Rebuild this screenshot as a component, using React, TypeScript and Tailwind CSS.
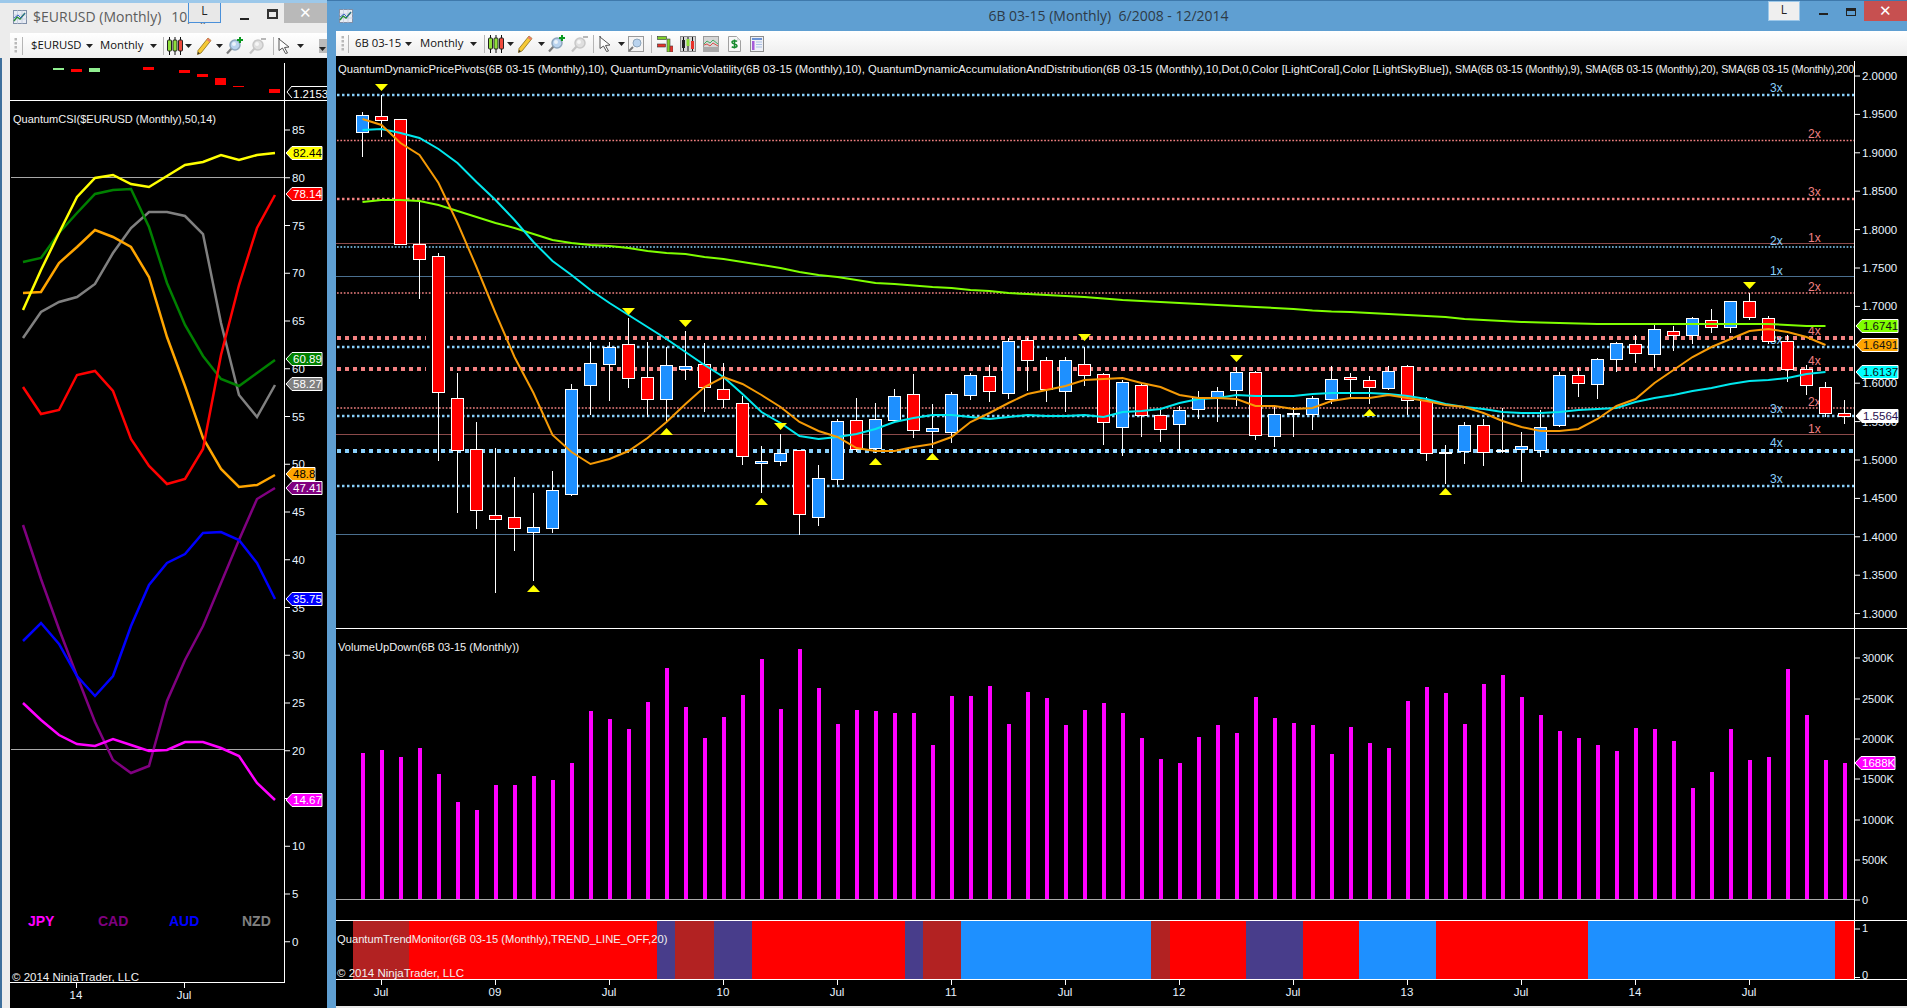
import React from 'react';

// [up, wickTop, bodyTop, bodyBottom, wickBottom] in page pixels
const candles: number[][] = [
  [1,112,115,132,157],[0,95,116,120,137],[0,119,119,244,244],[0,200,244,259,299],[0,253,256,392,461],
  [0,373,398,450,513],[0,422,449,510,529],[0,448,515,519,593],[0,477,517,528,551],[1,493,527,532,581],
  [1,471,490,528,533],[1,384,389,494,496],[1,342,363,385,415],[1,342,347,364,401],[0,318,344,378,388],
  [0,342,377,399,417],[1,347,365,399,423],[1,331,366,369,380],[0,343,364,387,412],[0,363,389,399,408],
  [0,396,403,456,465],[1,446,461,463,493],[1,434,453,461,466],[0,450,450,514,535],[1,465,478,517,526],
  [1,419,421,479,485],[0,398,420,449,452],[1,403,419,448,453],[1,389,396,420,423],[0,374,394,430,438],
  [1,404,428,431,448],[1,392,394,432,443],[1,373,375,395,400],[0,365,376,391,402],[1,338,341,393,399],
  [0,338,340,360,391],[0,357,360,389,402],[1,357,360,391,412],[0,347,364,375,386],[0,373,374,422,445],
  [1,380,382,427,456],[0,383,385,415,437],[0,410,415,429,442],[1,406,410,424,451],[1,391,397,409,419],
  [1,387,391,398,422],[1,367,372,390,406],[0,371,372,435,440],[1,407,414,436,447],[1,407,413,414,437],
  [1,396,398,414,430],[1,366,379,399,404],[0,373,377,379,397],[0,376,380,387,404],[1,366,371,388,390],
  [0,365,366,400,415],[0,397,400,453,461],[1,445,452,453,484],[1,422,425,451,464],[0,419,425,452,466],
  [1,408,450,451,453],[1,432,446,449,482],[1,410,427,450,457],[1,372,375,425,427],[0,368,375,383,397],
  [1,358,359,384,399],[1,342,343,359,372],[0,335,344,353,363],[1,323,329,354,368],[0,326,331,335,351],
  [1,317,318,335,344],[0,309,320,327,333],[1,301,301,327,333],[0,293,301,317,320],[0,316,318,341,344],
  [0,335,341,369,382],[0,365,369,385,395],[0,382,387,413,417],[0,400,413,416,424],
];

const sma9 = [119,125,143,155,183,223,267,313,357,393,435,452,464,459,451,438,422,404,387,377,384,395,407,422,431,437,448,451,451,447,444,437,422,413,403,394,390,386,380,379,378,383,387,395,398,398,399,406,406,409,408,401,398,398,395,398,401,405,407,413,421,427,431,431,429,419,406,399,383,370,357,347,339,331,329,332,337,345];
const sma20 = [130,129,133,138,149,163,182,200,220,242,261,275,290,303,315,327,339,352,365,377,394,412,423,436,439,437,434,429,422,418,415,415,417,419,417,415,416,416,415,417,412,411,409,403,399,398,395,396,396,396,394,393,393,393,394,396,399,404,407,409,412,413,413,412,410,409,408,402,398,395,391,388,384,381,380,378,374,372];
const sma200 = [202,200,200,201,205,211,217,223,228,234,240,243,245,246,248,251,253,254,257,259,262,265,268,272,275,277,280,283,284,285.5,287,288,290,291,293,294,295,296,297,298.5,300,301,302,303,304,305,306,307,308,309,310.5,311.5,312,313,314,315,316,317,319,320,321,322,322.5,323,323.5,324,324,324,324,324,324,324,324,324,324,325,326,326];

const volumeTops = [400,391,412,385,463,547,571,496,496,469,481,430,274,298,328,247,145,262,355,292,226,118,268,88,205,313,271,274,280,280,376,229,229,199,313,217,235,316,271,250,280,355,418,430,352,316,340,232,295,310,316,403,322,370,385,244,202,220,313,193,166,232,286,334,355,376,394,325,328,364,505,457,328,421,412,148,286,421,430];

const trendBlocks: [number, number, string][] = [
  [353,409,'#b22222'],[409,657,'#ff0000'],[657,675,'#483d8b'],[675,714,'#b22222'],[714,752,'#483d8b'],
  [752,905,'#ff0000'],[905,923,'#483d8b'],[923,961,'#b22222'],[961,1151,'#1e90ff'],[1151,1170,'#b22222'],
  [1170,1246,'#ff0000'],[1246,1303,'#483d8b'],[1303,1359,'#ff0000'],[1359,1436,'#1e90ff'],[1436,1588,'#ff0000'],
  [1588,1835,'#1e90ff'],[1835,1854,'#ff0000'],
];

// y, weight, colour of the pivot / volatility levels
const levels: [number, 'thin' | 'med' | 'thick', string][] = [
  [95,'med','#87cefa'],[140.5,'thin','#f08080'],[199,'med','#f08080'],[247,'thin','#87cefa'],[293,'thin','#f08080'],
  [338,'thick','#f08080'],[347,'med','#87cefa'],[369,'thick','#f08080'],[408,'thin','#f08080'],[416,'med','#87cefa'],
  [451,'thick','#87cefa'],[486,'med','#87cefa'],
];
const solidLevels: [number, string][] = [[243.5,'#8b4a4a'],[276.5,'#4a6f8f'],[434.5,'#8b4a4a'],[534.5,'#4a6f8f']];

const levelLabels: [number, number, string, string][] = [
  [1770,92,'3x','#87cefa'],[1808,138,'2x','#f08080'],[1808,196,'3x','#f08080'],[1770,245,'2x','#87cefa'],[1808,242,'1x','#f08080'],
  [1770,275,'1x','#87cefa'],[1808,291,'2x','#f08080'],[1808,335,'4x','#f08080'],[1770,344,'3x','#87cefa'],[1808,365,'4x','#f08080'],
  [1808,406,'2x','#f08080'],[1770,413,'3x','#87cefa'],[1808,433,'1x','#f08080'],[1770,447,'4x','#87cefa'],[1770,483,'3x','#87cefa'],
];

const downMarks: [number, number][] = [[1,84],[14,308],[17,320],[22,423],[38,334],[46,355],[73,282]];
const upMarks: [number, number][] = [[9,585],[16,428],[21,498],[27,458],[30,453],[53,409],[57,488]];

const priceTicks = ['2.0000','1.9500','1.9000','1.8500','1.8000','1.7500','1.7000','1.6500','1.6000','1.5500','1.5000','1.4500','1.4000','1.3500','1.3000'];
const volumeTicks: [string, number][] = [['3000K',658],['2500K',699],['2000K',739],['1500K',779],['1000K',820],['500K',860],['0',900]];
const timeTicks: [string, number][] = [['Jul',381],['09',495],['Jul',609],['10',723],['Jul',837],['11',951],['Jul',1065],['12',1179],['Jul',1293],['13',1407],['Jul',1521],['14',1635],['Jul',1749]];

const cx = (i: number) => 362.5 + 19 * i;
const poly = (ys: number[]) => ys.map((y, i) => `${cx(i)},${y}`).join(' ');

// left chart: 15 monthly points per currency
const leftX = (i: number) => 23 + 18 * i;
const leftPoly = (ys: number[]) => ys.map((y, i) => `${leftX(i)},${y}`).join(' ');
const csiLines: [string, number[]][] = [
  ['#808080',[338,312,302,297,284,253,228,212,212,216,234,323,395,417,385]],
  ['#ffa500',[293,292,263,247,230,237,247,277,337,386,438,469,487,485,475]],
  ['#008000',[262,258,233,213,194,190,189,227,283,325,356,379,386,373,360]],
  ['#ffff00',[310,270,233,197,178,175,184,187,176,165,162,155,160,155,153]],
  ['#800080',[525,579,629,676,722,760,773,766,701,660,626,583,540,499,488]],
  ['#0000ff',[641,623,644,676,696,676,626,585,563,554,533,532,540,563,599]],
  ['#ff00ff',[703,720,735,744,746,739,745,751,750,742,742,748,756,783,800]],
  ['#ff0000',[387,414,410,375,371,391,439,466,484,479,449,355,285,228,195]],
];
const csiTags: [number, string, string, string, number][] = [
  [153,'82.44','#ffff00','#000',322],[194,'78.14','#ff0000','#fff',322],[359,'60.89','#008000','#fff',322],[384,'58.27','#808080','#fff',322],
  [474,'48.8','#ffa500','#000',315],[488,'47.41','#800080','#fff',322],[599,'35.75','#0000ff','#fff',322],[800,'14.67','#ff00ff','#fff',322],
];
const topBars: [number, number, number, number, string][] = [
  [53,68,11,2,'#90ee90'],[71,69,11,3,'#ff0000'],[89,68,11,4,'#90ee90'],[143,67,11,3,'#ff0000'],[179,70,11,3,'#ff0000'],
  [197,74,11,3,'#ff0000'],[215,78,11,7,'#ff0000'],[233,86,11,1,'#ff0000'],[269,89,11,4,'#ff0000'],
];

function At({ className, children }: { className: string; children: React.ReactNode }) {
  return <span className={`flex shrink-0 items-center ${className}`}>{children}</span>;
}

function Tag({ x0, x1, y, label, fill, text }: { x0: number; x1: number; y: number; label: string; fill: string; text: string }) {
  return (
    <g>
      <polygon points={`${x0},${y} ${x0 + 6},${y - 6.5} ${x1},${y - 6.5} ${x1},${y + 6.5} ${x0 + 6},${y + 6.5}`} fill={fill} stroke="#fff" strokeWidth="1" />
      <text x={x0 + 7} y={y + 4} fontSize="11.5" fill={text}>{label}</text>
    </g>
  );
}

function Caret() {
  return (
    <svg width="7" height="4" viewBox="0 0 7 4" className="shrink-0"><path d="M0 0h7L3.5 4z" fill="#222" /></svg>
  );
}

function Grip() {
  return (
    <svg width="4" height="18" viewBox="0 0 4 18" className="shrink-0">
      {[1, 5, 9, 13].map((y) => <rect key={y} x="0.5" y={y} width="2.5" height="2.5" fill="#b8b8b8" />)}
    </svg>
  );
}

function Sep() {
  return <div className="h-[18px] w-px shrink-0 bg-[#b5b5b5]" />;
}

function CandleIcon() {
  return (
    <svg width="16" height="18" viewBox="0 0 16 18" className="shrink-0">
      <path d="M2.5 0v18M8 0v18M13.5 0v18" stroke="#111" strokeWidth="1" />
      <rect x="0.5" y="3" width="4" height="11" rx="1" fill="#8fe03a" stroke="#222" />
      <rect x="6" y="3" width="4" height="11" rx="1" fill="#8fe03a" stroke="#222" />
      <rect x="11.5" y="3" width="4" height="11" rx="1" fill="#ef4a3c" stroke="#222" />
    </svg>
  );
}

function PencilIcon() {
  return (
    <svg width="15" height="18" viewBox="0 0 15 18" className="shrink-0">
      <path d="M11 1l3 2.5L4 16l-3.5 1.5L1 13.500z" fill="#f6c935" stroke="#8a6d1b" strokeWidth="0.8" />
      <path d="M11 1l3 2.500-1.500 1.800-3-2.500z" fill="#e8806a" />
      <path d="M0.500 17.500L1 15l2 1.200z" fill="#333" />
    </svg>
  );
}

function GlassIcon({ plus = false, muted = false }: { plus?: boolean; muted?: boolean }) {
  return (
    <svg width="17" height="18" viewBox="0 0 17 18" className="shrink-0">
      <path d="M6 11L1 16.500" stroke={muted ? '#c4c4c4' : '#7c7c7c'} strokeWidth="2.200" />
      <circle cx="9" cy="8" r="5" fill={muted ? '#dfdfdf' : '#b9d3ee'} stroke={muted ? '#c8c8c8' : '#8ea6bd'} strokeWidth="1.500" />
      <circle cx="8" cy="7" r="2" fill="#fff" opacity="0.7" />
      {plus && <path d="M14 0v6M11 3h6" stroke="#0a9a20" strokeWidth="2" />}
      {muted && <path d="M12 2h5" stroke="#b8b8b8" strokeWidth="2" />}
    </svg>
  );
}

function CursorIcon() {
  return (
    <svg width="13" height="17" viewBox="0 0 13 17" className="shrink-0">
      <path d="M1 1l0 1 10 8-4.500.5L9.500 16l-2 .5-3-5.500L1 13.500z" fill="#fff" stroke="#555" strokeWidth="1" />
    </svg>
  );
}

function WindowIcon() {
  return (
    <svg width="14" height="14" viewBox="0 0 14 14" className="shrink-0">
      <rect x="0.500" y="0.500" width="13" height="13" fill="#e8ecf4" stroke="#7f8fa8" />
      <path d="M0 5h14M0 9h14M4.500 0v14M9 0v14" stroke="#b7c2d6" strokeWidth="0.600" />
      <path d="M1 11l3-4 3 2 5-6" fill="none" stroke="#2a8f3a" strokeWidth="1.400" />
      <path d="M1 8l4-3 3 3 4-5" fill="none" stroke="#3358c4" strokeWidth="0.900" />
    </svg>
  );
}

function BoxedGlass() {
  return (
    <svg width="16" height="16" viewBox="0 0 16 16" className="shrink-0">
      <rect x="0.500" y="0.500" width="15" height="15" fill="#f4f4f4" stroke="#9a9a9a" />
      <path d="M5 11L1 15" stroke="#777" strokeWidth="2" />
      <circle cx="9" cy="7" r="4" fill="#b9d3ee" stroke="#8ea6bd" />
    </svg>
  );
}

function BarsIcon() {
  return (
    <svg width="16" height="16" viewBox="0 0 16 16" className="shrink-0">
      <rect x="0.500" y="0.500" width="9" height="3" fill="#7fd02c" stroke="#333" strokeWidth="0.600" />
      <rect x="0.500" y="8" width="8" height="3" fill="#e8322a" stroke="#333" strokeWidth="0.600" />
      <rect x="10" y="3" width="3" height="13" fill="#7fd02c" stroke="#444" strokeWidth="0.600" />
      <rect x="13" y="10" width="3" height="6" fill="#e8322a" stroke="#444" strokeWidth="0.600" />
    </svg>
  );
}

function BoxedCandles() {
  return (
    <svg width="16" height="16" viewBox="0 0 16 16" className="shrink-0">
      <rect x="0.500" y="0.500" width="15" height="15" fill="#d8d8d8" stroke="#8a8a8a" />
      <path d="M3.500 1v14M8 1v14M12.500 1v14" stroke="#111" />
      <rect x="2" y="4" width="3" height="8" fill="#222" />
      <rect x="6.500" y="3" width="3" height="7" fill="#8fe03a" />
      <rect x="11" y="5" width="3" height="8" fill="#e8322a" />
    </svg>
  );
}

function MiniChart() {
  return (
    <svg width="16" height="16" viewBox="0 0 16 16" className="shrink-0">
      <rect x="0.500" y="0.500" width="15" height="15" fill="#d6d6d6" stroke="#9a9a9a" />
      <path d="M0 11h16v5H0z" fill="#a9a9a9" />
      <path d="M1 8l3-3 3 2 3-3 5 4" fill="none" stroke="#34a853" strokeWidth="0.900" />
      <path d="M1 9l3-1 3 2 3-3 5 3" fill="none" stroke="#d9433a" strokeWidth="0.900" />
    </svg>
  );
}

function DollarDoc() {
  return (
    <svg width="13" height="16" viewBox="0 0 13 16" className="shrink-0">
      <path d="M0.500 0.500h8l4 4v11h-12z" fill="#f7f7f7" stroke="#a0a0a0" />
      <path d="M9 4.500V1l3.500 3.500" fill="#ddd" />
      <path d="M9 5.500C8 4.500 4 4.300 4 6.300c0 2.200 5 1.200 5 3.500 0 2-4 2-5.200.8M6.500 3.500v9" fill="none" stroke="#178a2e" strokeWidth="1.500" />
    </svg>
  );
}

function TableIcon() {
  return (
    <svg width="14" height="16" viewBox="0 0 14 16" className="shrink-0">
      <rect x="0.500" y="0.500" width="13" height="15" fill="#eef0f6" stroke="#8d8d8d" />
      <rect x="2" y="2" width="10" height="2" fill="#6b93d6" />
      <rect x="2" y="5" width="2.500" height="9" fill="#a65bd9" />
      <path d="M6 6h6M6 8.500h6M6 11h6" stroke="#a9c0e6" />
    </svg>
  );
}

// price pane of the 6B window, in page coordinates
function PriceChart() {
  return (
    <svg className="block" width="1571" height="572" viewBox="336 56 1571 572">
      {solidLevels.map(([y, c]) => <line key={y} x1="336" x2="1854" y1={y} y2={y} stroke={c} />)}
      {levels.map(([y, weight, c]) => {
        const w = weight === 'thin' ? 1.7 : weight === 'med' ? 2.500 : 4;
        const dash = weight === 'thin' ? '1.700 1.700' : weight === 'med' ? '2.500 2.500' : '4 4';
        return <line key={y} x1="337" x2="1854" y1={y} y2={y} stroke={c} strokeWidth={w} strokeDasharray={dash} />;
      })}
      {/* the two heavy red levels break around the long 2008 candle */}
      <rect x="426" y="335" width="24" height="6" fill="#000" />
      <rect x="426" y="366" width="24" height="6" fill="#000" />
      {levelLabels.map(([x, y, t, c], i) => <text key={i} x={x} y={y} fontSize="12" fill={c}>{t}</text>)}
      {candles.map(([up, wt, bt, bb, wb], i) => (
        <g key={i} shapeRendering="crispEdges">
          <line x1={cx(i)} x2={cx(i)} y1={wt} y2={wb} stroke="#fff" />
          <rect x={cx(i) - 6} y={bt + 0.500} width="12" height={Math.max(bb - bt, 1)} fill={up ? '#1e90ff' : '#ff0000'} stroke="#fff" />
        </g>
      ))}
      <polyline points={poly(sma200)} fill="none" stroke="#7fff00" strokeWidth="2" />
      <polyline points={poly(sma20)} fill="none" stroke="#00e8ee" strokeWidth="2" />
      <polyline points={poly(sma9)} fill="none" stroke="#f59a06" strokeWidth="2" />
      {downMarks.map(([i, y]) => <polygon key={i} points={`${cx(i) - 6.500},${y} ${cx(i) + 6.500},${y} ${cx(i)},${y + 7}`} fill="#ffff00" />)}
      {upMarks.map(([i, y]) => <polygon key={i} points={`${cx(i) - 6.500},${y + 7} ${cx(i) + 6.500},${y + 7} ${cx(i)},${y}`} fill="#ffff00" />)}
      <line x1="1854.500" x2="1854.500" y1="61" y2="628" stroke="#fff" />
      {priceTicks.map((t, i) => {
        const y = 76 + i * 38.400;
        return (
          <g key={t}>
            <line x1="1854" x2="1860" y1={y} y2={y} stroke="#fff" />
            <text x="1862" y={y + 4} fontSize="11.500" fill="#e8f4ff">{t}</text>
          </g>
        );
      })}
      <Tag x0={1856} x1={1898} y={326} label="1.6741" fill="#7fff00" text="#111" />
      <Tag x0={1856} x1={1898} y={345} label="1.6491" fill="#ffa500" text="#111" />
      <Tag x0={1856} x1={1898} y={372} label="1.6137" fill="#00ffff" text="#111" />
      <Tag x0={1856} x1={1898} y={416} label="1.5564" fill="#ffffff" text="#2a1050" />
    </svg>
  );
}

function VolumeChart() {
  return (
    <svg className="block" width="1571" height="291" viewBox="336 629 1571 291">
      {volumeTops.map((top, i) => <rect key={i} x={cx(i) - 2} y={620 + top / 3} width="4" height={899 - 620 - top / 3} fill="#ff00ff" shapeRendering="crispEdges" />)}
      <line x1="336" x2="1854" y1="899.500" y2="899.500" stroke="#a8a8a8" />
      <line x1="1854.500" x2="1854.500" y1="629" y2="920" stroke="#fff" />
      {volumeTicks.map(([t, y]) => (
        <g key={t}>
          <line x1="1854" x2="1860" y1={y} y2={y} stroke="#fff" />
          <text x="1862" y={y + 4} fontSize="11" fill="#e8f4ff">{t}</text>
        </g>
      ))}
      <Tag x0={1855} x1={1895} y={763} label="1688K" fill="#ff00ff" text="#fff" />
    </svg>
  );
}

function TrendChart() {
  return (
    <svg className="block" width="1571" height="58" viewBox="336 921 1571 58">
      {trendBlocks.map(([a, b, c]) => <rect key={a} x={a} y="921" width={b - a} height="58" fill={c} shapeRendering="crispEdges" />)}
      <line x1="1854.500" x2="1854.500" y1="921" y2="979" stroke="#fff" />
      <line x1="1854" x2="1860" y1="929" y2="929" stroke="#fff" />
      <line x1="1854" x2="1860" y1="977.500" y2="977.500" stroke="#fff" />
      <text x="1862" y="932" fontSize="11" fill="#e8f4ff">1</text>
      <text x="1862" y="979" fontSize="11" fill="#e8f4ff">0</text>
    </svg>
  );
}

function TimeAxis() {
  return (
    <svg className="block" width="1571" height="26" viewBox="336 980 1571 26">
      {timeTicks.map(([t, x], i) => (
        <g key={i}>
          <line x1={x + 0.500} x2={x + 0.500} y1="980" y2="985" stroke="#fff" />
          <text x={x} y="996" fontSize="11.500" textAnchor="middle" fill="#e8f4ff">{t}</text>
        </g>
      ))}
    </svg>
  );
}

function CsiTop() {
  return (
    <svg className="block" width="317" height="42" viewBox="10 58 317 42">
      {topBars.map(([x, y, w, h, c], i) => <rect key={i} x={x} y={y} width={w} height={h} fill={c} />)}
      <line x1="284.500" x2="284.500" y1="63" y2="100" stroke="#fff" />
      <polyline points="292,86 287,92 292,98" fill="none" stroke="#fff" />
      <line x1="292" x2="327" y1="86.500" y2="86.500" stroke="#fff" />
      <text x="293" y="98" fontSize="11.500" fill="#fff">1.2153</text>
    </svg>
  );
}

function CsiChart() {
  const ticks = Array.from({ length: 18 }, (_, i) => 85 - i * 5);
  return (
    <svg className="block" width="317" height="882" viewBox="10 101 317 882">
      <line x1="11" x2="284" y1="177.500" y2="177.500" stroke="#a8a8a8" />
      <line x1="11" x2="284" y1="749.500" y2="749.500" stroke="#a8a8a8" />
      {csiLines.map(([c, ys]) => <polyline key={c} points={leftPoly(ys)} fill="none" stroke={c} strokeWidth="2.500" />)}
      <line x1="284.500" x2="284.500" y1="101" y2="982" stroke="#fff" />
      <line x1="10" x2="285" y1="982.500" y2="982.500" stroke="#fff" />
      {ticks.map((v) => {
        const y = 130 + (85 - v) * 9.550;
        return (
          <g key={v}>
            <line x1="284" x2="290" y1={y} y2={y} stroke="#fff" />
            <text x="292" y={y + 4} fontSize="11.500" fill="#e8f4ff">{v}</text>
          </g>
        );
      })}
      {csiTags.map(([y, t, c, txt, x1]) => <Tag key={t} x0={286} x1={x1} y={y} label={t} fill={c} text={txt} />)}
    </svg>
  );
}

function CsiTime() {
  return (
    <svg className="block" width="317" height="25" viewBox="10 983 317 25">
      <line x1="76.500" x2="76.500" y1="983" y2="988" stroke="#fff" />
      <line x1="184.500" x2="184.500" y1="983" y2="988" stroke="#fff" />
      <text x="76" y="999" fontSize="11.500" textAnchor="middle" fill="#e8f4ff">14</text>
      <text x="184" y="999" fontSize="11.500" textAnchor="middle" fill="#e8f4ff">Jul</text>
    </svg>
  );
}

export default function App() {
  return (
    <div className="flex h-[1008px] w-[1907px] overflow-hidden bg-black font-['Liberation_Sans',sans-serif] text-[11px] text-[#f2f2f2]">
      {/* left window */}
      <div className="relative flex w-[327px] shrink-0 flex-col bg-[#ececec]">
        <div className="absolute left-0 top-[58px] bottom-0 w-[2px] bg-[#3d6f9c]" />
        <div className="flex h-[33px] shrink-0 items-center border-t-[3px] border-[#9cc8ea] pl-[13px] pb-[3px] font-['Open_Sans',sans-serif] text-[14px] text-[#5c5c5c]">
          <WindowIcon />
          <span className="ml-[6px] whitespace-nowrap">$EURUSD (Monthly)</span>
          <span className="ml-[10px] whitespace-nowrap">10,</span>
          <span className="ml-[9px] self-end pb-[2px] text-[11px]">..</span>
          <div className="absolute right-0 top-[3px] h-[20px] w-[43px] bg-[#b9b9b9] text-center text-[15px] leading-[19px] text-white">✕</div>
          <div className="absolute left-[267px] top-[9px] h-[10px] w-[11px] border-2 border-t-[3px] border-[#333]" />
          <div className="absolute left-[240px] top-[18px] h-[2px] w-[9px] bg-[#222]" />
          <div className="absolute left-[188px] top-[3px] h-[20px] w-[33px] border border-t-0 border-[#4a90d9] bg-[#e8e8e8] text-center text-[12px] leading-[16px] text-[#222]">L</div>
        </div>
        <div className="ml-[10px] flex h-[25px] shrink-0 items-center bg-gradient-to-b from-white to-[#f0f0f0] font-['Open_Sans',sans-serif] text-[11.3px] text-[#111]">
          <At className="ml-[4px]"><Grip /></At>
          <At className="ml-[4px]"><Sep /></At>
          <span className="ml-[8px] w-[49px] whitespace-nowrap">$EURUSD</span>
          <At className="ml-[6px]"><Caret /></At>
          <span className="ml-[7px] w-[44px] whitespace-nowrap">Monthly</span>
          <At className="ml-[6px]"><Caret /></At>
          <At className="ml-[6px]"><Sep /></At>
          <At className="ml-[3px]"><CandleIcon /></At>
          <At className="ml-[2px]"><Caret /></At>
          <At className="ml-[5px]"><PencilIcon /></At>
          <At className="ml-[4px]"><Caret /></At>
          <At className="ml-[3px]"><GlassIcon plus /></At>
          <At className="ml-[6px]"><GlassIcon muted /></At>
          <At className="ml-[7px]"><Sep /></At>
          <At className="ml-[4px]"><CursorIcon /></At>
          <At className="ml-[6px]"><Caret /></At>
          <div className="ml-auto flex h-[14px] w-[8px] items-end bg-[#bbbbbb] pb-[2px]"><Caret /></div>
        </div>
        <div className="ml-[10px] flex flex-1 flex-col bg-black">
          <div className="border-b border-white"><CsiTop /></div>
          <div className="relative">
            <CsiChart />
            <div className="absolute left-[3px] top-[10px] whitespace-nowrap text-[11px]">QuantumCSI($EURUSD (Monthly),50,14)</div>
            <div className="absolute left-[18px] top-[810px] flex font-bold text-[14px]">
              <span className="w-[70px] text-[#ff00ff]">JPY</span>
              <span className="w-[71px] text-[#800080]">CAD</span>
              <span className="w-[73px] text-[#0000ff]">AUD</span>
              <span className="text-[#808080]">NZD</span>
            </div>
            <div className="absolute left-[2px] top-[868px] whitespace-nowrap text-[11.5px]">© 2014 NinjaTrader, LLC</div>
          </div>
          <CsiTime />
        </div>
      </div>

      {/* main window */}
      <div className="flex min-w-0 flex-1 flex-col bg-[#5f9fd2]">
        <div className="relative flex h-[31px] shrink-0 items-center justify-center border-t border-[#3f79ac] border-b-[#4a85b8] pr-[17px] font-['Open_Sans',sans-serif] text-[14px] text-[#2d3a46]">
          <div className="absolute left-[12px] top-[8px]"><WindowIcon /></div>
          <span className="relative -top-[1px] whitespace-pre">6B 03-15 (Monthly)  6/2008 - 12/2014</span>
          <div className="absolute left-[1441px] top-0 h-[20px] w-[32px] border border-[#9cc8ea] bg-[#efefef] text-center text-[12px] leading-[16px] text-[#222]">L</div>
          <div className="absolute left-[1492px] top-[12px] h-[2px] w-[9px] bg-[#222]" />
          <div className="absolute left-[1519px] top-[7px] h-[8px] w-[10px] border border-t-[3px] border-[#222]" />
          <div className="absolute left-[1537px] top-0 h-[20px] w-[43px] bg-[#c75050] text-center text-[15px] leading-[19px] text-white">✕</div>
        </div>
        <div className="ml-[9px] flex h-[25px] shrink-0 items-center bg-gradient-to-b from-white to-[#ededed] font-['Open_Sans',sans-serif] text-[11.3px] text-[#111]">
          <At className="ml-[5px]"><Grip /></At>
          <At className="ml-[3px]"><Sep /></At>
          <span className="ml-[6px] w-[45px] whitespace-nowrap">6B 03-15</span>
          <At className="ml-[5px]"><Caret /></At>
          <span className="ml-[8px] w-[45px] whitespace-nowrap">Monthly</span>
          <At className="ml-[5px]"><Caret /></At>
          <At className="ml-[7px]"><Sep /></At>
          <At className="ml-[3px]"><CandleIcon /></At>
          <At className="ml-[3px]"><Caret /></At>
          <At className="ml-[4px]"><PencilIcon /></At>
          <At className="ml-[5px]"><Caret /></At>
          <At className="ml-[3px]"><GlassIcon plus /></At>
          <At className="ml-[6px]"><GlassIcon muted /></At>
          <At className="ml-[5px]"><Sep /></At>
          <At className="ml-[5px]"><CursorIcon /></At>
          <At className="ml-[6px]"><Caret /></At>
          <At className="ml-[3px]"><BoxedGlass /></At>
          <At className="ml-[7px]"><Sep /></At>
          <At className="ml-[5px]"><BarsIcon /></At>
          <At className="ml-[7px]"><BoxedCandles /></At>
          <At className="ml-[7px]"><MiniChart /></At>
          <At className="ml-[9px]"><DollarDoc /></At>
          <At className="ml-[9px]"><TableIcon /></At>
        </div>
        <div className="ml-[9px] flex-1 bg-black">
          <div className="relative h-[573px] border-b border-white">
            <PriceChart />
            <div className="absolute left-[2px] top-[5px] w-[1516px] whitespace-nowrap text-[11.3px]">
              QuantumDynamicPricePivots(6B 03-15 (Monthly),10), QuantumDynamicVolatility(6B 03-15 (Monthly),10), QuantumDynamicAccumulationAndDistribution(6B 03-15 (Monthly),10,Dot,0,Color [LightCoral],Color [LightSkyBlue]), <span className="text-[10.6px] tracking-[-0.17px]">SMA(6B 03-15 (Monthly),9), SMA(6B 03-15 (Monthly),20), SMA(6B 03-15 (Monthly),200</span>
            </div>
          </div>
          <div className="relative h-[292px] border-b border-white">
            <VolumeChart />
            <div className="absolute left-[2px] top-[10px] whitespace-nowrap text-[11.1px]">VolumeUpDown(6B 03-15 (Monthly))</div>
          </div>
          <div className="relative h-[59px] border-b border-white">
            <TrendChart />
            <div className="absolute left-[1px] top-[10px] whitespace-nowrap text-[11.2px]">QuantumTrendMonitor(6B 03-15 (Monthly),TREND_LINE_OFF,20)</div>
            <div className="absolute left-[1px] top-[44px] whitespace-nowrap text-[11.5px]">© 2014 NinjaTrader, LLC</div>
          </div>
          <TimeAxis />
          <div className="h-[2px] bg-[#e8e8e8]" />
        </div>
      </div>
    </div>
  );
}
